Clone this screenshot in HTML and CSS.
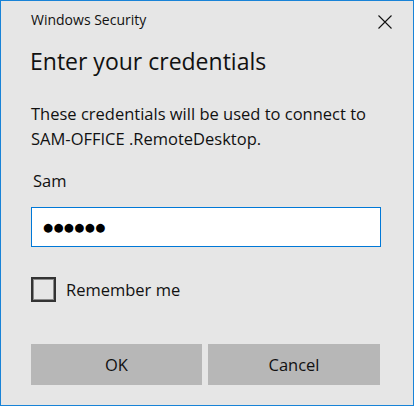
FILE: index.html
```html
<!DOCTYPE html>
<html>
<head>
<meta charset="utf-8">
<link rel="stylesheet" href="styles.css">
</head>
<body>
<div class="window">
  <div class="titlebar">
    <span class="title">Windows Security</span>
    <svg class="close" width="14" height="14" viewBox="0 0 14 14"><path d="M0.5 0.5 L13.5 13.5 M13.5 0.5 L0.5 13.5" stroke="#111" stroke-width="1.1" fill="none"/></svg>
  </div>
  <h1 class="heading">Enter your credentials</h1>
  <p class="message">These credentials will be used to connect to<br>SAM-OFFICE .RemoteDesktop.</p>
  <div class="user">Sam</div>
  <div class="password"><span class="dots">●●●●●●</span></div>
  <label class="remember"><span class="checkbox"></span><span class="remember-text">Remember me</span></label>
  <div class="buttons">
    <div class="btn">OK</div>
    <div class="btn">Cancel</div>
  </div>
</div>
</body>
</html>
```
FILE: styles.css
```css
html, body {
  margin: 0;
  padding: 0;
}
body {
  font-family: "Open Sans", "Noto Sans", sans-serif;
  color: #000;
}
.window {
  box-sizing: border-box;
  width: 414px;
  height: 406px;
  border: 1px solid #1883d7;
  background: #e6e6e6;
  padding: 0 32px 0 30px;
}
.titlebar {
  display: flex;
  justify-content: space-between;
  align-items: flex-start;
  height: 36px;
}
.title {
  font-size: 14px;
  margin-top: 9px;
  line-height: 20px;
  color: #111;
}
.close {
  margin-top: 14px;
  margin-right: -11px;
}
.heading {
  font-weight: 400;
  font-size: 23px;
  line-height: 30px;
  margin: 9px 0 0 -1px;
  color: #111;
}
.message {
  margin: 25px 0 0 0;
  font-size: 16.5px;
  line-height: 25px;
  color: #111;
}
.user {
  margin: 18px 0 0 2px;
  font-size: 16.5px;
  line-height: 24px;
  color: #111;
}
.password {
  box-sizing: border-box;
  margin-top: 14px;
  width: 350px;
  height: 40px;
  border: 1px solid #0078d7;
  background: #fff;
  display: flex;
  align-items: center;
  padding-left: 11px;
}
.dots {
  font-family: "DejaVu Sans", sans-serif;
  font-size: 11.5px;
  letter-spacing: 0.4px;
}
.remember {
  display: flex;
  align-items: center;
  margin-top: 30px;
}
.checkbox {
  box-sizing: border-box;
  width: 25px;
  height: 25px;
  border: 2px solid #333;
  box-shadow: inset 0 0 0 1px #8a8a8a;
  background: #e6e6e6;
}
.remember-text {
  margin-left: 10px;
  font-size: 16.5px;
  line-height: 24px;
  color: #111;
}
.buttons {
  display: flex;
  gap: 6px;
  margin-top: 42px;
}
.btn {
  height: 41px;
  width: 171px;
  background: #b7b7b7;
  display: flex;
  align-items: center;
  justify-content: center;
  font-size: 16.5px;
  color: #111;
}
.btn + .btn {
  width: 172px;
}
```
